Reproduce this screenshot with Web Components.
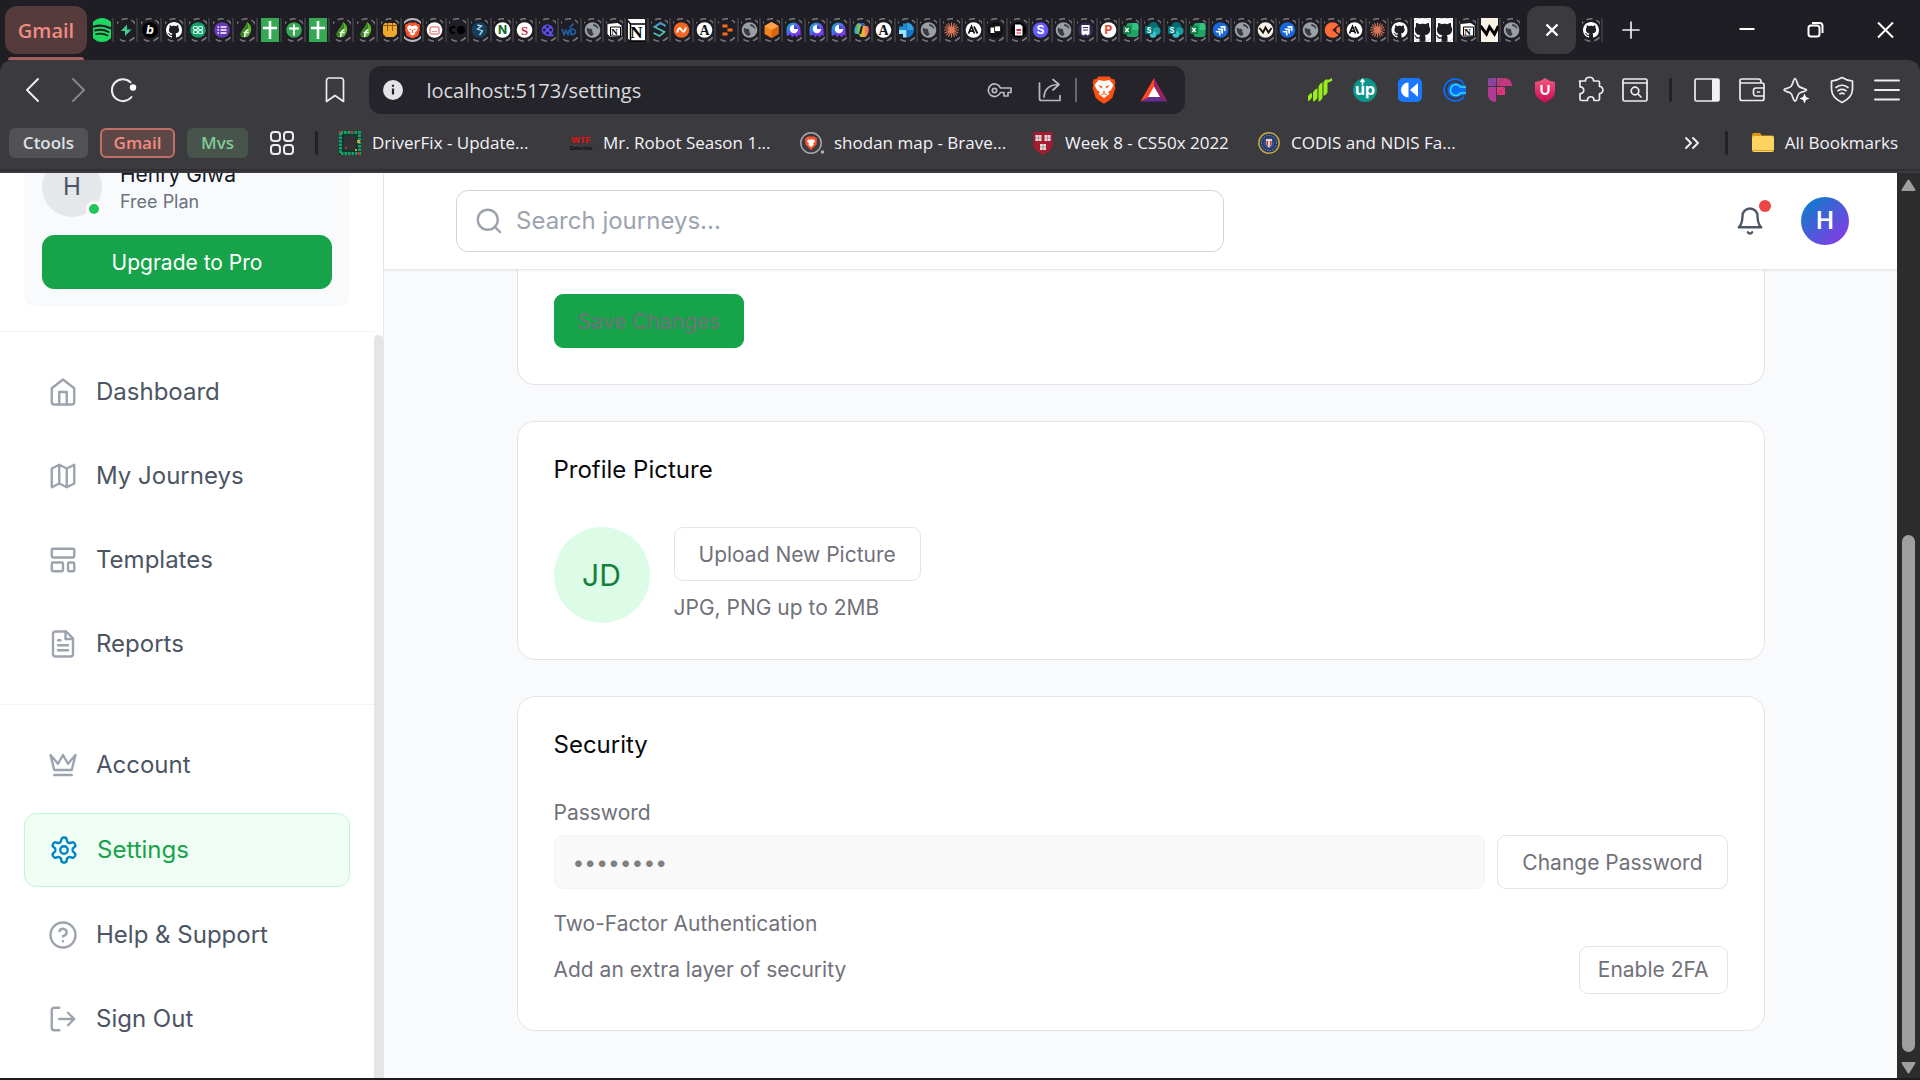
<!DOCTYPE html>
<html lang="en">
<head>
<meta charset="utf-8">
<title>Settings</title>
<style>
  html, body { margin: 0; height: 100%; }
  body { font-family: Inter, "Noto Sans", sans-serif; background: #1c1b20; overflow: hidden; }
</style>
</head>
<body>
<browser-window>
  <app-shell></app-shell>
</browser-window>

<script>
/* ---------- small helpers ---------- */
function define(name, html, extra) {
  const tpl = document.createElement('template');
  customElements.define(name, class extends HTMLElement {
    constructor() {
      super();
      tpl.innerHTML = typeof html === 'function' ? html(this) : html;
      this.attachShadow({ mode: 'open' }).append(tpl.content.cloneNode(true));
      if (extra) extra(this);
    }
  });
}

/* ---------- favicons, drawn in a 24 box whose sides are cut at 3 and 21 ---------- */
const ring = '<circle cx="12" cy="12" r="11.2" fill="none" stroke="#77777b" stroke-width="1.6" stroke-dasharray="6 4" stroke-dashoffset="2"/>';
const disc = c => `<circle cx="12" cy="12" r="7.8" fill="${c}"/>`;
const glyph = (ch, size, fill, fam, y) =>
  `<text x="12" y="${y || 12 + Math.round(size * .36)}" text-anchor="middle" font-size="${size}" font-weight="700" fill="${fill}" font-family="${fam || 'Inter'}, sans-serif">${ch}</text>`;
const octocat = 'M8 0C3.58 0 0 3.58 0 8c0 3.54 2.29 6.53 5.47 7.59.4.07.55-.17.55-.38 0-.19-.01-.82-.01-1.49-2.01.37-2.53-.49-2.69-.94-.09-.23-.48-.94-.82-1.13-.28-.15-.68-.52-.01-.53.63-.01 1.08.58 1.23.82.72 1.21 1.87.87 2.33.66.07-.52.28-.87.51-1.07-1.78-.2-3.64-.89-3.64-3.95 0-.87.31-1.59.82-2.15-.08-.2-.36-1.02.08-2.12 0 0 .67-.21 2.2.82.64-.18 1.32-.27 2-.27s1.36.09 2 .27c1.53-1.04 2.2-.82 2.2-.82.44 1.1.16 1.92.08 2.12.51.56.82 1.27.82 2.15 0 3.07-1.87 3.75-3.65 3.95.29.25.54.73.54 1.48 0 1.07-.01 1.93-.01 2.2 0 .21.15.46.55.38A8.01 8.01 0 0 0 16 8c0-4.42-3.58-8-8-8z';
const lionShield = 'M8.5 4.5h7l1.6 1.6 1.5-.1 1 2.4-.6 1.6.6 1.8-2 6.1L12 20.5l-5.6-2.6-2-6.1.6-1.8-.6-1.6 1-2.4 1.5.1z';
const lionFace = 'M12 8l3.500-.8 2 2.600-1.200 3.200-2.200 1.200 1 1.300L12 17.800l-3.100-2.300 1-1.300-2.200-1.200-1.200-3.200 2-2.600z';
const FAV = {
  spotify: `<circle cx="12" cy="12" r="12" fill="#1ed760"/><g fill="none" stroke="#1f1e24" stroke-linecap="round"><path d="M4 8.500c5-1.500 11-1 16 1.500" stroke-width="2.200"/><path d="M5 12.500c4.500-1.200 9.500-.8 13.500 1.500" stroke-width="1.900"/><path d="M6 16.200c4-1 8-.6 11.500 1.300" stroke-width="1.600"/></g>`,
  bolt: ring + `<path d="M13 6.500v5h4.500L11 18v-5H6.800z" fill="#3ecf8e"/>`,
  bb: ring + disc('#000') + glyph('<tspan font-style="italic">b</tspan>', 12, '#fff'),
  github: ring + `<g transform="translate(4 4)"><path fill="#fff" d="${octocat}"/></g>`,
  githubFull: `<g transform="scale(1.5)"><rect width="16" height="16" fill="#fff"/><rect width="16" height="16" rx="8" fill="#1f1e24"/><path fill="#fff" d="${octocat}"/></g>`,
  braces: ring + disc('#12a36c') + `<g fill="none" stroke="#d7fbe9" stroke-width="1.200"><rect x="7.500" y="8.500" width="4" height="3" rx="1"/><rect x="12.500" y="8.500" width="4" height="3" rx="1"/><rect x="7.500" y="12.500" width="4" height="3" rx="1"/><rect x="12.500" y="12.500" width="4" height="3" rx="1"/></g>`,
  list: ring + disc('#673ab7') + `<path d="M7.500 9h1.500M10.500 9h6M7.500 12h1.500M10.500 12h6M7.500 15h1.500M10.500 15h6" stroke="#fff" stroke-width="1.700"/>`,
  leaf: ring + `<path d="M13 4c5 3 6 9 1 14.500-3 1.500-6 1-7.500-1C6 13 12 10 13 4z" fill="#5fb52c"/><path d="M13 4c0 7-6 9-6.500 13.500l4 1.500c3-4 5-9 2.500-15z" fill="#2e7d1e"/><path d="M10.500 19c.5-4 1-7 4-7.500M9.500 14.500h5" stroke="#fff" stroke-width="1.600" fill="none"/>`,
  sheetFull: `<rect width="24" height="24" fill="#34a853"/><path d="M12 3v18M5 10h14" stroke="#fff" stroke-width="2.600"/>`,
  sheet: ring + disc('#34a853') + `<path d="M12 6.500v11M7 10.500h10" stroke="#fff" stroke-width="2"/>`,
  crate: ring + `<path d="M5 7l2-2h10l2 2v9l-3 3H8l-3-3z" fill="#f0a92b"/><path d="M5 7.500h14M9.500 5v8M14.500 5v8" stroke="#8a5a0c" fill="none"/>`,
  brave: `<circle cx="12" cy="12" r="11" fill="none" stroke="#b6b6c2" stroke-width="1.800"/><path d="${lionShield}" fill="#fb542b"/><path d="${lionFace}" fill="#fff"/><path d="M9 11l2 .800M15 11l-2 .800M12 12v3" stroke="#fb542b" fill="none"/>`,
  card: ring + disc('#fff') + `<rect x="7.500" y="9" width="9" height="7" rx="1" fill="#fff" stroke="#ee8f92" stroke-width="1.600"/><path d="M9.500 13.500h5" stroke="#ee8f92"/>`,
  co: ring + `<circle cx="15.500" cy="12" r="4" fill="#000"/><path d="M9.500 9.500a3 3 0 1 0 0 5" fill="none" stroke="#000" stroke-width="2"/>`,
  teal: ring + disc('#16405c') + `<path d="M10 7l4 1-4 3 5 2-3 4" stroke="#a9dbe8" fill="none" stroke-width="1.300"/>`,
  nn: ring + disc('#fff') + glyph('N', 12, '#0b6b1f'),
  ss: ring + disc('#fff') + glyph('S', 13, '#c4233c', 'Liberation Serif'),
  film: ring + `<circle cx="12" cy="12" r="5.800" fill="#5b4df0"/><path d="M12 17.200h6" stroke="#5b4df0" stroke-width="2"/><g fill="#1f1e24"><circle cx="12" cy="8.800" r="1.400"/><circle cx="12" cy="15.200" r="1.400"/><circle cx="8.800" cy="12" r="1.400"/><circle cx="15.200" cy="12" r="1.400"/></g>`,
  wd: ring + `<path d="M4.500 11l2 5.500 2-4 2 4 1.500-5M13.500 11v5.500c3 0 4.500-1 4.500-2.800S16.500 11 13.500 11zM12 10l4-4.500" stroke="#1e5fa5" fill="none" stroke-width="1.700"/>`,
  globe: ring + disc('#9aa0a6') + `<path d="M6.500 9.500c1.500 2 4 .5 5 2s-.5 2.500 1 3.500-.5 2.500-1.500 3C7.500 17 5.500 13 6.500 9.500zM13 6c-1 1.500 0 2.500 1.500 2.500S16 11 18 10.800C17.500 8 15.500 6.300 13 6z" fill="#3a3b40"/>`,
  notion: ring + `<path d="M5 6l10-1 4 2.500V18l-11 1-3-3z" fill="#fff"/><path d="M8 9h10v9H8z" fill="#fff" stroke="#000"/>` + glyph('N', 9, '#000', 'Liberation Serif', 17),
  notionFull: `<path d="M2 1h18l2 3v19H6l-4-4z" fill="#fff"/><path d="M6 6h16v17H6zM2 1l4 5" fill="#fff" stroke="#000" stroke-width="1.500"/>` + glyph('N', 17, '#000', 'Liberation Serif', 20),
  swirl: ring + `<path d="M18 8l-5-3-6 4 10 5-5 4-6-3" fill="none" stroke="#4fc3b4" stroke-width="1.700"/><path d="M18 8l-5-3-6 4" fill="none" stroke="#4795d6" stroke-width="1.700"/>`,
  wave: ring + disc('#f26522') + `<path d="M7.500 14.500c1.500-5 3-5 4.500-2.500s3 2.500 4.500-2.500" stroke="#fff" stroke-width="2" fill="none"/>`,
  aa: ring + disc('#fff') + glyph('A', 14, '#111', 'Liberation Serif'),
  dashes: ring + `<path d="M8 8h5M13 12h5M8 16h5" stroke="#ff6a13" stroke-width="3.200"/>`,
  cube: ring + `<path d="M12 4l7 4v8l-7 4-7-4V8z" fill="#f58220"/><path d="M12 12v8l7-4V8z" fill="#d9650c"/><path d="M12 4l7 4-7 4-7-4z" fill="#ffa04a"/>`,
  octo: ring + `<linearGradient id="o" x1="0" y1="0" x2="1" y2="1"><stop offset="0" stop-color="#06c4d4"/><stop offset=".6" stop-color="#6a3df0"/><stop offset="1" stop-color="#8e3cf5"/></linearGradient><path d="M12 4.500a7 7 0 0 1 7 7c0 3 .5 5 0 6.500l-2-1.500-1.500 3-2.500-2.500-2.500 2.500-1.500-3L5.500 18c-.5-2-.5-4-.5-6.500a7 7 0 0 1 7-7z" fill="url(#o)"/><circle cx="12.500" cy="11" r="4.200" fill="#fff"/><path d="M12.500 11V7a4 4 0 0 1 4 4z" fill="#3e49d8"/>`,
  copilot: ring + `<linearGradient id="c" x1="0" y1="0" x2="1" y2="0"><stop offset="0" stop-color="#1f9de0"/><stop offset=".35" stop-color="#8bc34a"/><stop offset=".6" stop-color="#f5b52e"/><stop offset="1" stop-color="#e8507a"/></linearGradient><path d="M9 5h5l2 3h2c3 2 1 9-2 11h-5l-2-3H6C3 14 6 6 9 5z" fill="url(#c)"/><path d="M12.500 8l-2 8" stroke="#1f1e24" stroke-width="2"/><path d="M9 5h5l2 3h-3z" fill="#2f5bd8"/>`,
  plus: ring + `<path d="M12 4.500a7.500 7.500 0 0 1 7.500 7.500H12z" fill="#2d9ee0"/><path d="M12 12h7.500a7.500 7.500 0 0 1-7.500 7.500z" fill="#0c76c8"/><path d="M4.500 12H12v7.500H8.500V16h-4z" fill="#9fe0fb"/><path d="M8.500 5.500H12V12H4.500V8.500h4z" fill="#1e8ad2"/>`,
  burst: ring + `<path d="M12 4.500v15M4.500 12h15M6.700 6.700l10.600 10.600M17.300 6.700L6.700 17.300M9 5.200l6 13.600M15 5.200L9 18.800M5.200 9l13.600 6M5.200 15l13.600-6" stroke="#d97757" stroke-width="1.100"/>`,
  ai: ring + disc('#fff') + `<path d="M7 15.500L10 8.500l3 7M8 13.200h4M12.500 8.500l3.500 7" stroke="#111" stroke-width="1.700" fill="none"/>`,
  squares: ring + disc('#111') + `<path d="M7 9.500h4v5.500H7z" fill="#fff"/><path d="M11 8h6v5.500h-6z" fill="#fff" stroke="#111" stroke-width=".8"/>`,
  doc: ring + disc('#000') + `<path d="M8.500 6.500H14l2 2v9H8.500z" fill="#fff"/><path d="M10 11h4.500v2H10z" fill="#d8213b"/><path d="M10 15h4.500" stroke="#d8213b"/>`,
  sp: ring + disc('#635bff') + glyph('S', 12, '#fff'),
  note: ring + disc('#2d2b55') + `<path d="M8 7h8v9l-2 1.500L12 16l-2 1.500L8 16z" fill="#fff"/><path d="M9.500 9.500h5M9.500 12h5" stroke="#2d2b55"/>`,
  pp: ring + disc('#fff') + glyph('P', 12, '#e1472d'),
  excel: ring + `<rect x="8" y="5" width="12" height="14" rx="3" fill="#21a366"/><path d="M14 5h3a3 3 0 0 1 3 3v4h-6z" fill="#33c481"/><rect x="4.500" y="8" width="8" height="8" rx="1" fill="#107c41"/><path d="M6.800 10l3.400 4M10.200 10l-3.400 4" stroke="#fff" stroke-width="1.300"/>`,
  share: ring + `<circle cx="13" cy="9" r="5" fill="#036c70"/><circle cx="16" cy="13" r="4" fill="#1a9ba1"/><circle cx="12.500" cy="16.500" r="3.300" fill="#37c6d0"/><rect x="4.500" y="8" width="8" height="8" rx="1" fill="#03787c"/>` + glyph('<tspan x="8.500">S</tspan>', 7, '#fff', 'Inter', 15),
  jira: ring + disc('#1868db') + `<path d="M11.500 8H17v5.500l-1.800-1V9.800h-2.700zM9 10.500h5.500V16l-1.800-1v-2.700H10zM7 13h5v5l-1.600-1v-2.400H8z" fill="#fff"/>`,
  ww: ring + disc('#f7f1e6') + `<path d="M6 10l3.500 4.500 2.500-5 3 5L18 10" fill="none" stroke="#111" stroke-width="1.900"/>`,
  wwFull: `<rect width="24" height="24" fill="#f9f2e7"/><path d="M3 8l6 8 3-7 5 7 4-8" fill="none" stroke="#000" stroke-width="3"/>`,
  post: ring + disc('#ff6c37') + `<path d="M20 6l-7 6 6 5M13 12h3" fill="none" stroke="#1f1e24" stroke-width="1.500"/>`,
};
define('fav-icon', el => `
  <style>:host{display:block;width:18px;height:24px} svg{display:block;width:100%;height:100%}</style>
  <svg viewBox="3 0 18 24" preserveAspectRatio="xMidYMid slice" aria-hidden="true">${FAV[el.getAttribute('name')] || ''}</svg>`);

/* ---------- line icons of the app and of the browser ---------- */
const APP = {
  home: '<path d="m3 9 9-7 9 7v11a2 2 0 0 1-2 2H5a2 2 0 0 1-2-2z"/><path d="M9 22V12h6v10"/>',
  map: '<path d="M3 6l6-3 6 3 6-3v15l-6 3-6-3-6 3zM9 3v15M15 6v15"/>',
  template: '<rect x="3" y="3" width="18" height="7" rx="1"/><rect x="3" y="14" width="9" height="7" rx="1"/><rect x="16" y="14" width="5" height="7" rx="1"/>',
  file: '<path d="M14.500 2H6a2 2 0 0 0-2 2v16a2 2 0 0 0 2 2h12a2 2 0 0 0 2-2V7.500z"/><path d="M14 2v6h6M16 13H8M16 17H8M10 9H8"/>',
  crown: '<path d="m2 4 3 12h14l3-12-6 7-4-7-4 7-6-7zm3 16h14"/>',
  gear: '<path d="M12.220 2h-.44a2 2 0 0 0-2 2v.18a2 2 0 0 1-1 1.730l-.43.25a2 2 0 0 1-2 0l-.15-.08a2 2 0 0 0-2.730.73l-.22.38a2 2 0 0 0 .73 2.730l.15.1a2 2 0 0 1 1 1.720v.51a2 2 0 0 1-1 1.740l-.15.09a2 2 0 0 0-.73 2.730l.22.38a2 2 0 0 0 2.730.73l.15-.08a2 2 0 0 1 2 0l.43.25a2 2 0 0 1 1 1.730V20a2 2 0 0 0 2 2h.44a2 2 0 0 0 2-2v-.18a2 2 0 0 1 1-1.730l.43-.25a2 2 0 0 1 2 0l.15.08a2 2 0 0 0 2.730-.73l.22-.39a2 2 0 0 0-.73-2.730l-.15-.08a2 2 0 0 1-1-1.740v-.5a2 2 0 0 1 1-1.740l.15-.09a2 2 0 0 0 .73-2.730l-.22-.38a2 2 0 0 0-2.730-.73l-.15.08a2 2 0 0 1-2 0l-.43-.25a2 2 0 0 1-1-1.730V4a2 2 0 0 0-2-2z"/><circle cx="12" cy="12" r="3"/>',
  help: '<circle cx="12" cy="12" r="10"/><path d="M9.090 9a3 3 0 0 1 5.830 1c0 2-3 3-3 3M12 17h.01"/>',
  logout: '<path d="M9 21H5a2 2 0 0 1-2-2V5a2 2 0 0 1 2-2h4M16 17l5-5-5-5M21 12H9"/>',
  search: '<circle cx="11" cy="11" r="8"/><path d="m21 21-4.300-4.300"/>',
  bell: '<path d="M6 8a6 6 0 0 1 12 0c0 7 3 9 3 9H3s3-2 3-9M10.300 21a1.940 1.940 0 0 0 3.400 0"/>',
};
define('app-icon', el => `
  <style>:host{display:block;flex:none;width:30px;height:30px} svg{display:block}</style>
  <svg width="30" height="30" viewBox="0 0 24 24" fill="none" stroke="currentColor" stroke-width="1.900" stroke-linecap="round" stroke-linejoin="round" aria-hidden="true">${APP[el.getAttribute('name')]}</svg>`);

/* Browser icons use a 30 unit box, one unit to the pixel. */
const L = 'fill="none" stroke="#ececf1" stroke-width="1.700" stroke-linejoin="round" stroke-linecap="round"';
const CH = {
  back: `<path d="M20 4L9 15l11 11" ${L} style="stroke-width:2"/>`,
  forward: `<path d="M10 4l11 11-11 11" ${L} style="stroke:#85858b;stroke-width:2"/>`,
  reload: `<path d="M22.500 7.200A11 11 0 1 0 23.500 22" ${L} style="stroke-width:2"/><circle cx="25" cy="12.500" r="3.200" fill="#fff"/>`,
  bookmark: `<path d="M9 3h12a2.500 2.500 0 0 1 2.500 2.500V26.500L15 20.500l-8.500 6V5.500A2.500 2.500 0 0 1 9 3z" ${L}/>`,
  info: `<circle cx="15" cy="15" r="10" fill="#e3e3e8"/><path d="M15 13.500v6M15 9.800v2" stroke="#25242a" stroke-width="2.200"/>`,
  key: `<g ${L} style="stroke:#b9b9bf"><path d="M15.500 13h10.500v4.500h-3v3.500h-4v-3.500h-3.500a6.300 6.300 0 1 1 0-4.500z"/><circle cx="9.500" cy="15.500" r="2.200"/></g>`,
  share: `<g ${L} style="stroke:#b9b9bf"><path d="M4.500 8v15.500a2 2 0 0 0 2 2h18.500v-5M9 22c.5-8 5-12 14-12.500M18 4.500l6 5-6 5.500"/></g>`,
  lion: `<path d="M9.500 1.500h11l2.500 2.800 2.200-.2 1.300 3.700-1 2.400 1 2.500-3 9.600c-.5 1.300-5 4.500-8.500 6.400-3.500-1.900-8-5.100-8.500-6.400l-3-9.600 1-2.500-1-2.400 1.300-3.700 2.200.2z" fill="#fb5012"/><path d="M15 6l5.500-1 4 5-2.500 5-3 2 1.500 2L15 23l-5.500-4L11 17l-3-2-2.500-5 4-5z" fill="#fff"/><path d="M9 10l4.500 1.500-1 2zM21 10l-4.500 1.500 1 2zM14 16h2l-1 3z" fill="#fb5012"/><path d="M12 20l3-1.500 3 1.500" stroke="#fb5012" fill="none"/>`,
  bat: `<path d="M15 3L1.500 26.500 15 21z" fill="#ff4724"/><path d="M15 3l13.500 23.500L15 21z" fill="#9e1f63"/><path d="M1.500 26.500L15 19l13.500 7.500z" fill="#662d91"/><path d="M15 11.500l6 10.500H9z" fill="#fff"/>`,
  bars: `<path d="M3 22c0-2 4-5 4-3v2.500c0 2-4 6-4 4zM8 18c0-2 4.500-6 4.500-4v8c0 2-4.500 6-4.500 4zM13.500 12c0-2 4-6 4-4v14c0 2-4 6-4 4zM18.500 8c0-2 4-5 4-3v12c0 2-4 5-4 3z" fill="#9aed1b"/><path d="M21 6l6-3v3l-5 2z" fill="#9aed1b"/>`,
  up: `<circle cx="15" cy="15" r="12" fill="#0d948b"/><text x="15" y="20" text-anchor="middle" font-size="16" font-weight="700" font-family="Inter, sans-serif" fill="#fff">up</text><path d="M12.500 10.500V5M10.500 7l2-2.500 2 2.500" stroke="#fff" stroke-width="1.500" fill="none"/>`,
  rewind: `<rect x="3" y="3" width="24" height="24" rx="5" fill="#1978ff"/><path d="M13.500 7.500v15a7.500 7.500 0 0 1 0-15zM23 8v14l-8-7z" fill="#fff"/>`,
  cc: `<path d="M24 8.500a11 11 0 1 0 0 13M25 10.500h-5a6 6 0 1 0 0 9h5" stroke="#0a6cf5" stroke-width="1.800" fill="none"/><circle cx="15" cy="15" r="7.500" fill="#0a6cf5"/><path d="M26 12h-5.500a5.500 5.500 0 1 0 0 6H26" stroke="#35dff5" stroke-width="1.500" fill="#0a6cf5"/>`,
  ff: `<path d="M3 3h8v8H3z" fill="#8d45a4"/><path d="M12 3h7c5 0 8 3 8 8H12z" fill="#c3397f"/><path d="M3 12h8v15c-5 0-8-3-8-7z" fill="#b23a92"/><path d="M12 12h8v8h-8z" fill="#e5337e"/><path d="M3 3l8 8M12 11l7-8M12 20l8-8" stroke="#6b2f7c" stroke-width=".6"/>`,
  ublock: `<linearGradient id="u" x1="0" y1="0" x2="0" y2="1"><stop offset="0" stop-color="#f25a80"/><stop offset="1" stop-color="#cc0a56"/></linearGradient><path d="M15 3c3 2.500 6 3.500 10 4v9c0 6-4.500 9-10 11.500C9.500 25 5 22 5 16V7c4-.5 7-1.500 10-4z" fill="url(#u)"/><path d="M11.500 10v5.500a3.500 3.500 0 0 0 7 0V10" fill="none" stroke="#fff" stroke-width="2.200"/>`,
  puzzle: `<path d="M4.500 6h6c-.8-5 8.800-5 8 0h4.500a1.500 1.500 0 0 1 1.500 1.500v4c4.500-.5 4.500 7.500 0 7v5.500a1.500 1.500 0 0 1-1.500 1.500h-4c.5-5-7-5-6.500 0h-6a1.500 1.500 0 0 1-1.500-1.500v-5.500c5 .5 5-7 0-6.500v-4A1.500 1.500 0 0 1 6.500 6" ${L}/>`,
  winsearch: `<g ${L}><rect x="3" y="4" width="24" height="22" rx="1.500"/><path d="M3 8h24"/><circle cx="15" cy="16" r="3.800"/><path d="M18 19l3 3"/></g>`,
  panel: `<rect x="3" y="4" width="24" height="22" rx="1.500" ${L}/><path d="M20 4h7v22h-7z" fill="#f1f1f5"/>`,
  wallet: `<g ${L}><path d="M3 8v15.500a2 2 0 0 0 2 2H25a2 2 0 0 0 2-2V10a2 2 0 0 0-2-2H3V5.500a1.500 1.500 0 0 1 1.500-1.500h17a2.500 2.500 0 0 1 2.500 2.500V8M27 13h-8a2.500 2.500 0 0 0-2.500 2.500v3A2.500 2.500 0 0 0 19 21h8"/><path d="M20.500 17h2"/></g>`,
  sparkle: `<path d="M13 3.500c1.500 0 2.200 6.500 4 8s7.500 2.500 7.500 3.500c0 1.500-5.500 1.500-7.500 3.500s-2.200 7.500-4 7.500-2.200-5.500-4-7.500S2 16.500 2 15s5-1.500 7-3.500 2.500-8 4-8z" ${L}/><path d="M22.500 18.500l1.500 3.500 3.500 1.500-3.500 1.500-1.500 3.500-1.500-3.500-3.500-1.500L21 22z" fill="#fff"/>`,
  shield: `<g ${L}><path d="M15 2.500c3 2 6.500 3 10.500 3.500v8c0 6-4 10.500-10.500 13.500C8.500 24.500 4.500 20 4.500 14V6c4-.5 7.500-1.500 10.500-3.500z"/><path d="M9 12.500c4-3 8-3 12 0M11 15.800c3-2 5-2 8 0M13 18.800c1.500-1 2.500-1 4 0"/></g>`,
  menu: `<path d="M3 5.500h24M3 15h24M3 24.500h24" ${L} style="stroke-width:2"/>`,
  grid: `<g ${L} style="stroke-width:2"><rect x="4" y="4" width="9" height="9" rx="3"/><rect x="17" y="4" width="9" height="9" rx="3"/><rect x="4" y="17" width="9" height="9" rx="3"/><rect x="17" y="17" width="9" height="9" rx="3"/></g>`,
  more: `<path d="M9 10l5 5-5 5M16 10l5 5-5 5" ${L} style="stroke-width:2"/>`,
  folder: `<path d="M4 7a2 2 0 0 1 2-2h6l2 2.500h10a2 2 0 0 1 2 2V12H4z" fill="#dd9a12"/><rect x="4" y="8" width="22" height="16" rx="2" fill="#fcd462"/><path d="M4 22.500h22" stroke="#d9a52f"/>`,
  driver: `<rect x="4" y="3" width="22" height="24" fill="#0c3b2c"/><g fill="none" stroke="#18a06d" stroke-width="3" stroke-dasharray="2.500 1"><rect x="5.500" y="4.500" width="19" height="21"/></g><rect x="9" y="8" width="12" height="14" fill="#333135"/><g fill="#c62f2f"><path d="M4 3h2v2H4zM15 3h3v2h-3zM23 24h2v3h-2zM10 19h2v2h-2z"/></g><path d="M22 12h3v3h-3zM20 21h2v2h-2z" fill="#d3a22a"/>`,
  wtf: `<text x="15" y="15" text-anchor="middle" font-size="9" font-weight="700" fill="#f40d0d" font-family="Liberation Sans, sans-serif">WTF</text><text x="15" y="22" text-anchor="middle" font-size="5" font-weight="700" fill="#0c0c0c" font-family="Liberation Sans, sans-serif">Detective</text>`,
  bravering: `<circle cx="14" cy="15" r="10.200" fill="none" stroke="#a7a7b0" stroke-width="1.500"/><path d="M11 8.500h6l3 2-.500 6-5.500 5.500-5.500-5.500-.500-6z" fill="#fb542b"/><path d="M11 11.500h6l1 2-2 2 .500 1.500-2.500 2-2.500-2 .500-1.500-2-2z" fill="#fff"/><circle cx="25.500" cy="24" r="1.800" fill="#b0b0b8"/>`,
  harvard: `<path d="M5.500 4h19v13c0 4-4 7-9.500 10C9.500 24 5.500 21 5.500 17z" fill="#a51c30"/><path d="M7.500 7h6v6h-6zM16.500 7h6v6h-6zM12 16h6v6h-6z" fill="#e9dcdc"/><path d="M10.500 7v6M19.500 7v6M15 16v6M7.500 10h6M16.500 10h6M12 19h6" stroke="#a08488" stroke-width=".8"/>`,
  seal: `<circle cx="15" cy="15" r="10.200" fill="#24386a" stroke="#c9a93c" stroke-width="1.500"/><circle cx="15" cy="15" r="7.500" fill="none" stroke="#b8b3a0" stroke-dasharray="1 1.500"/><circle cx="15" cy="15" r="5.500" fill="#3b4c86"/><path d="M12 11h6v5l-3 4-3-4z" fill="#dfd3cd"/><path d="M12.500 13h1.500v5l-1.500-2zM16 13h1.500v3L16 18z" fill="#b5303a"/>`,
  add: `<path d="M15 7v16M7 15h16" ${L}/>`,
  tabclose: `<path d="M9.500 9.500l11 11M20.500 9.500l-11 11" stroke="#fff" stroke-width="2.400"/>`,
  min: `<path d="M7.500 14h15" stroke="#fff" stroke-width="2"/>`,
  restore: `<g fill="none" stroke="#fff" stroke-width="2"><rect x="7.500" y="10.500" width="11" height="11" rx="2.500"/><path d="M11 8h7.500a3 3 0 0 1 3 3v7"/></g>`,
  close: `<path d="M8 7.500l15 15M23 7.500l-15 15" stroke="#fff" stroke-width="2"/>`,
};
define('chrome-icon', el => `
  <style>:host{display:block;flex:none;width:30px;height:30px} svg{display:block}</style>
  <svg width="30" height="30" viewBox="0 0 30 30" aria-hidden="true">${CH[el.getAttribute('name')]}</svg>`);

define('tool-button', el => `
  <style>
    :host{display:block;flex:none;width:45px}
    button{all:unset;display:flex;width:100%;height:48px;align-items:center;justify-content:center}
  </style>
  <button type="button" aria-label="${el.getAttribute('icon')}"><chrome-icon name="${el.getAttribute('icon')}"></chrome-icon></button>`);

/* ---------- tab strip ---------- */
const pinned = 'spotify bolt bb github braces list leaf sheetFull sheet sheetFull leaf leaf crate'.split(' ');
const open = ('brave card co teal nn ss film wd globe notion notionFull swirl wave aa dashes globe cube octo octo octo copilot aa plus globe burst ' +
  'ai squares doc sp globe note pp excel share share excel jira globe ww jira globe post ai burst github githubFull githubFull notion wwFull globe').split(' ');
const tab = n => `<button type="button" aria-label="Tab"><fav-icon name="${n}"></fav-icon></button>`;
define('tab-strip', `
  <style>
    :host{display:flex;height:60px;align-items:center;background:#1f1e24;font-family:"Open Sans","Noto Sans",sans-serif}
    button{all:unset;box-sizing:border-box;display:flex;align-items:center}
    .group{flex:none;position:relative;align-self:flex-start;margin:6px 3px 0 5px;width:82px;height:48px;border-radius:12px;justify-content:center;background:#553b3b;color:#f28b82;font-size:20px;font-weight:600}
    .group::after{content:"";position:absolute;left:3px;right:3px;bottom:-6px;height:3px;border-radius:3px 3px 0 0;background:#a65f5e}
    .tabs{display:flex;height:24px}
    .tabs button{height:24px;padding-left:3px;border-right:2px solid #39383d;overflow:hidden}
    .pinned button{width:24px}
    .open{flex:1;min-width:0}
    .open button{flex:1 1 0;min-width:0;padding-left:2px}
    .open fav-icon{width:17px;flex:none}
    .open button:last-child{border-color:transparent}
    .active{flex:none;width:49px;height:48px;margin:0 3px;border-radius:12px;background:#3b3a3f;justify-content:center}
    .last{flex:none;width:24px}
    .last button{width:24px}
    .new{margin:0 86px 0 13px}
    .win{gap:39px;display:flex;padding-right:20px}
  </style>
  <button class="group" type="button">Gmail</button>
  <div class="tabs pinned">${pinned.map(tab).join('')}</div>
  <div class="tabs open">${open.map(tab).join('')}</div>
  <button class="active" type="button" aria-label="Close tab"><chrome-icon name="tabclose"></chrome-icon></button>
  <div class="tabs last">${tab('github')}</div>
  <button class="new" type="button" aria-label="New tab"><chrome-icon name="add"></chrome-icon></button>
  <div class="win">
    <button type="button" aria-label="Minimize"><chrome-icon name="min"></chrome-icon></button>
    <button type="button" aria-label="Restore"><chrome-icon name="restore"></chrome-icon></button>
    <button type="button" aria-label="Close"><chrome-icon name="close"></chrome-icon></button>
  </div>`);

/* ---------- address bar row ---------- */
const tools = list => list.split(' ').map(n => `<tool-button icon="${n}"></tool-button>`).join('');
define('tool-bar', `
  <style>
    :host{display:flex;align-items:center;height:60px;padding:0 11px 0 10px;font-family:"Open Sans","Noto Sans",sans-serif}
    .row{display:flex;align-items:center}
    .lead{flex:3} .trail{flex:2}
    .url{flex:0 1 816px;min-width:0;height:48px;box-sizing:border-box;margin-left:12px;padding:0 6px 0 9px;border-radius:12px;background:#25242a}
    .url input{all:unset;flex:1;min-width:0;margin-left:18px;padding-top:2px;color:#dadade;font-size:20px;line-height:30px}
    .url tool-button{width:50px}
    .url i{width:2px;height:24px;margin-right:2px;background:#68676d}
    .sep{width:27px;display:flex;justify-content:center}
    .sep::after{content:"";width:3px;height:24px;border-radius:2px;background:#222126}
  </style>
  <div class="row">${tools('back forward reload')}</div>
  <div class="lead"></div>
  <tool-button icon="bookmark"></tool-button>
  <div class="row url">
    <chrome-icon name="info"></chrome-icon>
    <input type="text" aria-label="Address" value="localhost:5173/settings">
    ${tools('key share')}<i></i>${tools('lion bat')}
  </div>
  <div class="trail"></div>
  <div class="row">${tools('bars up rewind cc ff ublock puzzle winsearch')}<div class="sep"></div>${tools('panel wallet sparkle shield menu')}</div>`);

/* ---------- bookmarks row ---------- */
define('bookmark-link', el => `
  <style>
    :host{display:block;flex:none}
    a{display:flex;align-items:center;gap:7px;padding-right:21px;color:#f3f3f6;text-decoration:none;white-space:nowrap}
    span{min-width:168px}
    :host([cut]) span{width:173px}
    :host([end]) a{padding:0}
    :host([end]) span{min-width:0}
  </style>
  <a href="#"><chrome-icon name="${el.getAttribute('icon')}"></chrome-icon><span><slot></slot></span></a>`);
define('bookmark-bar', `
  <style>
    :host{display:flex;align-items:center;height:51px;padding:0 22px 4px 9px;box-sizing:border-box;border-bottom:2px solid #302f34;font:17px/30px "Open Sans","Noto Sans",sans-serif;color:#f3f3f6}
    .chip{all:unset;box-sizing:border-box;height:30px;margin-right:12px;border-radius:6px;text-align:center;font-weight:600}
    .c{width:79px;background:#515156;color:#dfe1e5}
    .g{width:75px;line-height:26px;border:2px solid #bf6f6a;background:#5c4646;color:#f28b82}
    .m{width:61px;background:#46544c;color:#81c995}
    .sep{flex:none;width:3px;height:24px;border-radius:2px;background:#222126}
    .first{margin:0 17px 0 18px}
    .end{margin:0 20px 0 18px}
    chrome-icon{margin-left:7px}
    .space{flex:1}
  </style>
  <button class="chip c" type="button">Ctools</button>
  <button class="chip g" type="button">Gmail</button>
  <button class="chip m" type="button">Mvs</button>
  <chrome-icon name="grid"></chrome-icon>
  <div class="sep first"></div>
  <bookmark-link icon="driver" cut>DriverFix - Update...</bookmark-link>
  <bookmark-link icon="wtf" cut>Mr. Robot Season 1...</bookmark-link>
  <bookmark-link icon="bravering" cut>shodan map - Brave...</bookmark-link>
  <bookmark-link icon="harvard">Week 8 - CS50x 2022</bookmark-link>
  <bookmark-link icon="seal" cut>CODIS and NDIS Fa...</bookmark-link>
  <div class="space"></div>
  <chrome-icon name="more"></chrome-icon>
  <div class="sep end"></div>
  <bookmark-link icon="folder" end>All Bookmarks</bookmark-link>`);

define('page-scrollbar', `
  <style>
    :host{display:flex;flex-direction:column;align-items:center;justify-content:space-between;flex:none;width:23px;background:#2c2c2c;box-sizing:border-box;padding:5px 0 3px}
    .track{flex:1;display:flex;flex-direction:column;margin:4px 0 10px;width:13px}
    .before{flex:340} .thumb{flex:517;border-radius:7px;background:#9f9f9f}
    svg{display:block}
  </style>
  <svg width="15" height="13" viewBox="0 0 15 13"><path d="M7.500 2.500L13.500 12h-12z" fill="#9f9f9f" stroke="#9f9f9f" stroke-width="2" stroke-linejoin="round"/></svg>
  <div class="track"><div class="before"></div><div class="thumb"></div></div>
  <svg width="15" height="13" viewBox="0 0 15 13"><path d="M7.500 10.500L13.500 1h-12z" fill="#9f9f9f" stroke="#9f9f9f" stroke-width="2" stroke-linejoin="round"/></svg>`);

define('browser-window', `
  <style>
    :host{display:flex;flex-direction:column;height:100vh;background:#1f1e24}
    .bars{flex:none;background:#3b3a3f;border-radius:12px 12px 0 0;padding-bottom:2px}
    .view{flex:1;min-height:0;display:flex;border-bottom:2px solid #1c1b20}
    .page{flex:1;min-width:0;display:flex}
  </style>
  <tab-strip></tab-strip>
  <div class="bars"><tool-bar></tool-bar><bookmark-bar></bookmark-bar></div>
  <div class="view"><div class="page"><slot></slot></div><page-scrollbar></page-scrollbar></div>`);

/* ---------- the app ---------- */
define('app-button', el => `
  <style>
    :host{display:block;flex:none}
    button{all:unset;box-sizing:border-box;display:block;width:100%;height:54px;padding:0 24px;border:1px solid #e4e4e7;border-radius:9px;background:#fff;color:#71717a;font-size:21px;line-height:51px;text-align:center;white-space:nowrap}
    :host([kind=small]) button{height:48px;padding:0 18px;line-height:46px}
    :host([kind=primary]) button{padding:0 23px;background:#16a34a;border-color:#16a34a}
    :host([kind=upgrade]) button{background:#16a34a;border-color:#16a34a;border-radius:12px;color:#fff}
  </style>
  <button type="button"><slot></slot></button>`);

define('nav-item', el => `
  <style>
    :host{display:block}
    a{display:flex;align-items:center;gap:18px;height:72px;padding:0 24px;border-radius:12px;color:#4b5563;font-size:24px;line-height:36px;text-decoration:none}
    app-icon{color:#9ca3af}
    :host([current]) a{border:1px solid #bbf7d0;background:#f0fdf4;color:#16a34a}
    :host([current]) app-icon{color:#0284c7}
  </style>
  <a href="#"><app-icon name="${el.getAttribute('icon')}"></app-icon><slot></slot></a>`);

define('side-bar', `
  <style>
    :host{display:flex;flex:none;width:383px;border-right:1px solid #e5e7eb;background:#fff;overflow:hidden}
    .col{flex:1;min-width:0}
    .rail{flex:none;width:9px;margin-top:162px;border-radius:5px 5px 0 0;background:#e5e5e5}
    .card{margin:-34px 24px 24px;padding:18px;border-radius:12px;background:#f9fafb}
    .who{display:flex;align-items:center;gap:18px;margin-bottom:18px}
    .avatar{position:relative;width:60px;height:60px;border-radius:50%;background:#e5e7eb;color:#4b5563;font-size:24px;line-height:60px;text-align:center}
    .avatar::after{content:"";position:absolute;right:0;bottom:0;width:10px;height:10px;border:3px solid #fff;border-radius:50%;background:#22c55e}
    .name{font-size:21px;line-height:30px;color:#111827}
    .plan{font-size:18px;line-height:24px;color:#6b7280}
    nav{display:flex;flex-direction:column;gap:12px;padding:24px;border-top:1px solid #f3f4f6}
  </style>
  <div class="col">
    <div class="card">
      <div class="who"><div class="avatar">H</div><div><div class="name">Henry Giwa</div><div class="plan">Free Plan</div></div></div>
      <app-button kind="upgrade">Upgrade to Pro</app-button>
    </div>
    <nav>
      <nav-item icon="home">Dashboard</nav-item>
      <nav-item icon="map">My Journeys</nav-item>
      <nav-item icon="template">Templates</nav-item>
      <nav-item icon="file">Reports</nav-item>
    </nav>
    <nav>
      <nav-item icon="crown">Account</nav-item>
      <nav-item icon="gear" current>Settings</nav-item>
      <nav-item icon="help">Help &amp; Support</nav-item>
      <nav-item icon="logout">Sign Out</nav-item>
    </nav>
  </div>
  <div class="rail"></div>`);

define('top-header', `
  <style>
    :host{display:flex;align-items:center;flex:none;height:96px;padding:0 48px 0 72px;border-bottom:1px solid #e5e7eb;background:#fff;box-shadow:0 1px 3px rgba(0,0,0,.06);z-index:1}
    label{flex:0 1 768px;min-width:0;box-sizing:border-box;height:62px;display:flex;align-items:center;gap:12px;padding:0 17px;border:1px solid #d1d5db;border-radius:12px;color:#9ca3af}
    input{all:unset;flex:1;min-width:0;font-size:24px;line-height:36px;color:#111827}
    input::placeholder{color:#9ca3af;opacity:1}
    .space{flex:1}
    button{all:unset}
    .bell{position:relative;margin-right:36px;color:#4b5563}
    .bell::after{content:"";position:absolute;right:-6px;top:-6px;width:12px;height:12px;border-radius:50%;background:#ef4444}
    .me{width:48px;height:48px;border-radius:50%;background:linear-gradient(135deg,#0284c7,#9333ea);color:#fff;font-size:24px;font-weight:600;line-height:48px;text-align:center}
  </style>
  <label><app-icon name="search"></app-icon><input type="text" placeholder="Search journeys..." aria-label="Search journeys"></label>
  <div class="space"></div>
  <button class="bell" type="button" aria-label="Notifications"><app-icon name="bell"></app-icon></button>
  <button class="me" type="button">H</button>`);

define('settings-card', `
  <style>
    :host{display:block;box-sizing:border-box;padding:36px;border:1px solid #e4e4e7;border-radius:18px;background:#fff}
    :host([scrolled]){padding-top:24px;border-top:0;border-radius:0 0 18px 18px}
    ::slotted(h2){margin:0 0 45px;font-size:24px;font-weight:400;line-height:24px;color:#09090b}
  </style>
  <slot name="title"></slot><slot></slot>`);

define('settings-page', `
  <style>
    :host{display:block;flex:1;min-height:0;overflow:hidden;background:#f9fafb}
    h2{margin:0 0 45px;font-size:24px;font-weight:400;line-height:24px;color:#09090b}
    .list{display:flex;flex-direction:column;gap:36px;max-width:1248px;margin:0 auto}
    .row{display:flex;align-items:center}
    .start{justify-content:flex-start;gap:24px}
    .avatar{width:96px;height:96px;border-radius:50%;background:#dcfce7;color:#15803d;font-size:30px;line-height:96px;text-align:center}
    .stack{display:flex;flex-direction:column;gap:12px}
    .text{font-size:21px;line-height:30px;color:#71717a}
    .label{display:block;margin-bottom:12px;font-size:21px;line-height:21px;color:#71717a}
    .gap{gap:12px;margin-bottom:24px}
    input{flex:1;min-width:0;box-sizing:border-box;height:54px;margin:0;padding:0 18px;border:1px solid #f2f2f3;border-radius:9px;background:#f9f9f9;color:#808080;font:21px/30px Inter,sans-serif}
    .between{justify-content:space-between}
  </style>
  <div class="list">
    <settings-card scrolled><div class="row"><app-button kind="primary">Save Changes</app-button></div></settings-card>
    <settings-card>
      <h2 slot="title">Profile Picture</h2>
      <div class="row start">
        <div class="avatar">JD</div>
        <div class="stack"><app-button>Upload New Picture</app-button><div class="text">JPG, PNG up to 2MB</div></div>
      </div>
    </settings-card>
    <settings-card>
      <h2 slot="title">Security</h2>
      <label class="label" for="pw">Password</label>
      <div class="row gap"><input id="pw" type="password" value="12345678" disabled><app-button>Change Password</app-button></div>
      <div class="label">Two-Factor Authentication</div>
      <div class="row between"><div class="text">Add an extra layer of security</div><app-button kind="small">Enable 2FA</app-button></div>
    </settings-card>
  </div>`);

define('app-shell', `
  <style>
    :host{display:flex;flex:1;min-width:0;font-family:Inter,"Noto Sans",sans-serif}
    main{flex:1;min-width:0;display:flex;flex-direction:column}
  </style>
  <side-bar></side-bar>
  <main><top-header></top-header><settings-page></settings-page></main>`);
</script>
</body>
</html>
